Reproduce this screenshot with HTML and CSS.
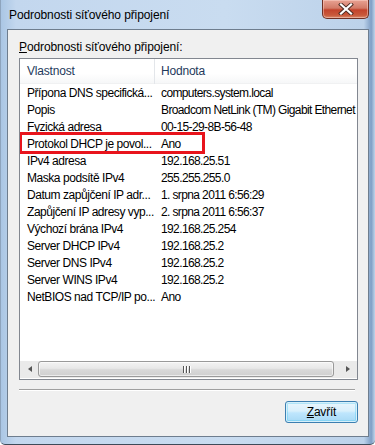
FILE: index.html
```html
<!DOCTYPE html>
<html lang="cs">
<head>
    <meta charset="UTF-8">
    <title>Podrobnosti síťového připojení</title>
    <link rel="stylesheet" href="styles.css">
</head>
<body>
    <div class="window">
        <div class="titlebar">
            <span class="title">Podrobnosti síťového připojení</span>
            <button class="close-btn" aria-label="Zavřít">
                <svg width="16" height="12" viewBox="0 0 16 12">
                    <path d="M3 1.5 L13 10.5 M13 1.5 L3 10.5" stroke="#4a2a22" stroke-width="4" stroke-linecap="square"/>
                    <path d="M3 1.5 L13 10.5 M13 1.5 L3 10.5" stroke="#ffffff" stroke-width="2.2" stroke-linecap="square"/>
                </svg>
            </button>
        </div>

        <div class="client">
            <div class="caption"><u>P</u>odrobnosti síťového připojení:</div>

            <div class="listbox">
                <div class="list-header">
                    <div class="col col-name">Vlastnost</div>
                    <div class="col col-value">Hodnota</div>
                </div>
                <div class="rows">
                    <div class="row"><div class="col col-name">Přípona DNS specifická...</div><div class="col col-value">computers.system.local</div></div>
                    <div class="row"><div class="col col-name">Popis</div><div class="col col-value">Broadcom NetLink (TM) Gigabit Ethernet</div></div>
                    <div class="row"><div class="col col-name">Fyzická adresa</div><div class="col col-value">00-15-29-8B-56-48</div></div>
                    <div class="row marked"><div class="col col-name">Protokol DHCP je povol...</div><div class="col col-value">Ano</div><span class="mark"></span></div>
                    <div class="row"><div class="col col-name">IPv4 adresa</div><div class="col col-value">192.168.25.51</div></div>
                    <div class="row"><div class="col col-name">Maska podsítě IPv4</div><div class="col col-value">255.255.255.0</div></div>
                    <div class="row"><div class="col col-name">Datum zapůjčení IP adr...</div><div class="col col-value">1. srpna 2011 6:56:29</div></div>
                    <div class="row"><div class="col col-name">Zapůjčení IP adresy vyp...</div><div class="col col-value">2. srpna 2011 6:56:37</div></div>
                    <div class="row"><div class="col col-name">Výchozí brána IPv4</div><div class="col col-value">192.168.25.254</div></div>
                    <div class="row"><div class="col col-name">Server DHCP IPv4</div><div class="col col-value">192.168.25.2</div></div>
                    <div class="row"><div class="col col-name">Server DNS IPv4</div><div class="col col-value">192.168.25.2</div></div>
                    <div class="row"><div class="col col-name">Server WINS IPv4</div><div class="col col-value">192.168.25.2</div></div>
                    <div class="row"><div class="col col-name">NetBIOS nad TCP/IP po...</div><div class="col col-value">Ano</div></div>
                </div>

                <div class="hscroll">
                    <div class="arrow arrow-left"></div>
                    <div class="track">
                        <div class="thumb"><span class="grip"></span><span class="grip"></span><span class="grip"></span></div>
                    </div>
                    <div class="arrow arrow-right"></div>
                </div>
            </div>

            <div class="separator"></div>

            <div class="actions">
                <button class="btn default"><u>Z</u>avřít</button>
            </div>
        </div>
    </div>
</body>
</html>
```

FILE: styles.css
```css
body {
    margin: 0;
    padding: 0;
    font-family: 'Liberation Sans', Arial, sans-serif;
    font-size: 12px;
    color: #000;
    background: #fff;
}

.window {
    width: 375px;
    height: 445px;
    box-sizing: border-box;
    display: flex;
    flex-direction: column;
    background: linear-gradient(to right, #aac6e4 0%, #c3d7ee 4%, #c9dcf0 60%, #bcd2ea 97%, #7f9fc6 99%, #c0d4ea 100%);
    border-left: 1px solid #8ea4bd;
    border-bottom: 1px solid #3e4a58;
    border-radius: 0 0 5px 5px;
}

/* title bar */
.titlebar {
    height: 29px;
    display: flex;
    align-items: flex-start;
    flex-shrink: 0;
}

.title {
    padding: 8px 0 0 8px;
    line-height: 14px;
    letter-spacing: -0.1px;
}

.close-btn {
    margin-left: auto;
    margin-right: 6px;
    width: 47px;
    height: 19px;
    padding: 0;
    border: 1px solid #6e3025;
    border-top: none;
    border-radius: 0 0 5px 5px;
    background: linear-gradient(to bottom, #e8a293 0%, #d27b68 45%, #c3432c 55%, #c95a3c 85%, #d98c6e 100%);
    box-shadow: inset 0 0 0 1px rgba(255, 220, 210, 0.45);
    display: flex;
    align-items: center;
    justify-content: center;
}

/* client area */
.client {
    flex: 1;
    margin: 0 6px 7px 6px;
    border: 1px solid #6e7d8e;
    background: #f0f0f0;
    padding: 10px 10px 0 11px;
    display: flex;
    flex-direction: column;
}

.caption {
    line-height: 15px;
    height: 18px;
    letter-spacing: -0.1px;
}

.listbox {
    width: 337px;
    height: 320px;
    border: 1px solid #828790;
    background: #fff;
    display: flex;
    flex-direction: column;
    overflow: hidden;
}

.col {
    white-space: nowrap;
    overflow: hidden;
    box-sizing: border-box;
    letter-spacing: -0.45px;
}

.col-name {
    width: 135px;
    padding-left: 7px;
    flex-shrink: 0;
}

.col-value {
    flex: 1;
    padding-left: 6px;
    letter-spacing: -0.62px;
}

.list-header {
    height: 25px;
    display: flex;
    align-items: center;
    background: linear-gradient(to bottom, #ffffff 0%, #ffffff 60%, #f6f7f8 100%);
    border-bottom: 1px solid #f0f1f2;
    box-sizing: border-box;
}

.list-header .col {
    color: #1e395b;
    height: 25px;
    line-height: 25px;
    letter-spacing: -0.2px;
}

.list-header .col-name {
    border-right: 1px solid #e3e6ea;
}

.rows {
    flex: 1;
    padding-top: 1px;
}

.row {
    display: flex;
    height: 17px;
    line-height: 17px;
    position: relative;
}

.mark {
    position: absolute;
    left: -1px;
    top: -4px;
    width: 186px;
    height: 22px;
    box-sizing: border-box;
    border: 3px solid #e8141c;
}

/* horizontal scrollbar */
.hscroll {
    height: 17px;
    display: flex;
    background: #eaeaea;
    flex-shrink: 0;
    margin-bottom: 1px;
}

.arrow {
    width: 18px;
    position: relative;
}

.arrow::after {
    content: "";
    position: absolute;
    top: 5px;
    border-top: 3.5px solid transparent;
    border-bottom: 3.5px solid transparent;
}

.arrow-left::after {
    left: 8px;
    border-right: 4px solid #555;
}

.arrow-right::after {
    left: 7px;
    border-left: 4px solid #555;
}

.track {
    flex: 1;
    display: flex;
}

.thumb {
    width: 296px;
    height: 16px;
    box-sizing: border-box;
    border: 1px solid #999;
    border-radius: 3px;
    background: linear-gradient(to bottom, #f3f3f3 0%, #e8e8e8 45%, #d9d9d9 55%, #cfcfcf 100%);
    box-shadow: inset 0 0 0 1px rgba(255, 255, 255, 0.6);
    display: flex;
    align-items: center;
    justify-content: center;
    gap: 2px;
}

.grip {
    width: 1px;
    height: 7px;
    background: #555;
    box-shadow: 1px 0 0 #fff;
}

.separator {
    margin-top: 9px;
    width: 336px;
    height: 1px;
    background: #a0a0a0;
    border-bottom: 1px solid #fff;
}

.actions {
    display: flex;
    justify-content: flex-end;
    padding-top: 10px;
}

.btn {
    width: 73px;
    height: 22px;
    font-family: 'Liberation Sans', Arial, sans-serif;
    font-size: 12px;
    color: #000;
    padding: 0;
    border: 1px solid #3c7fb1;
    border-radius: 3px;
    background: linear-gradient(to bottom, #eaf6fd 0%, #d9f0fc 45%, #bee6fd 55%, #a7d9f5 100%);
    box-shadow: inset 0 0 0 1px #d6f0fb, inset 0 0 0 2px rgba(72, 200, 240, 0.35);
    letter-spacing: -0.2px;
}
```
